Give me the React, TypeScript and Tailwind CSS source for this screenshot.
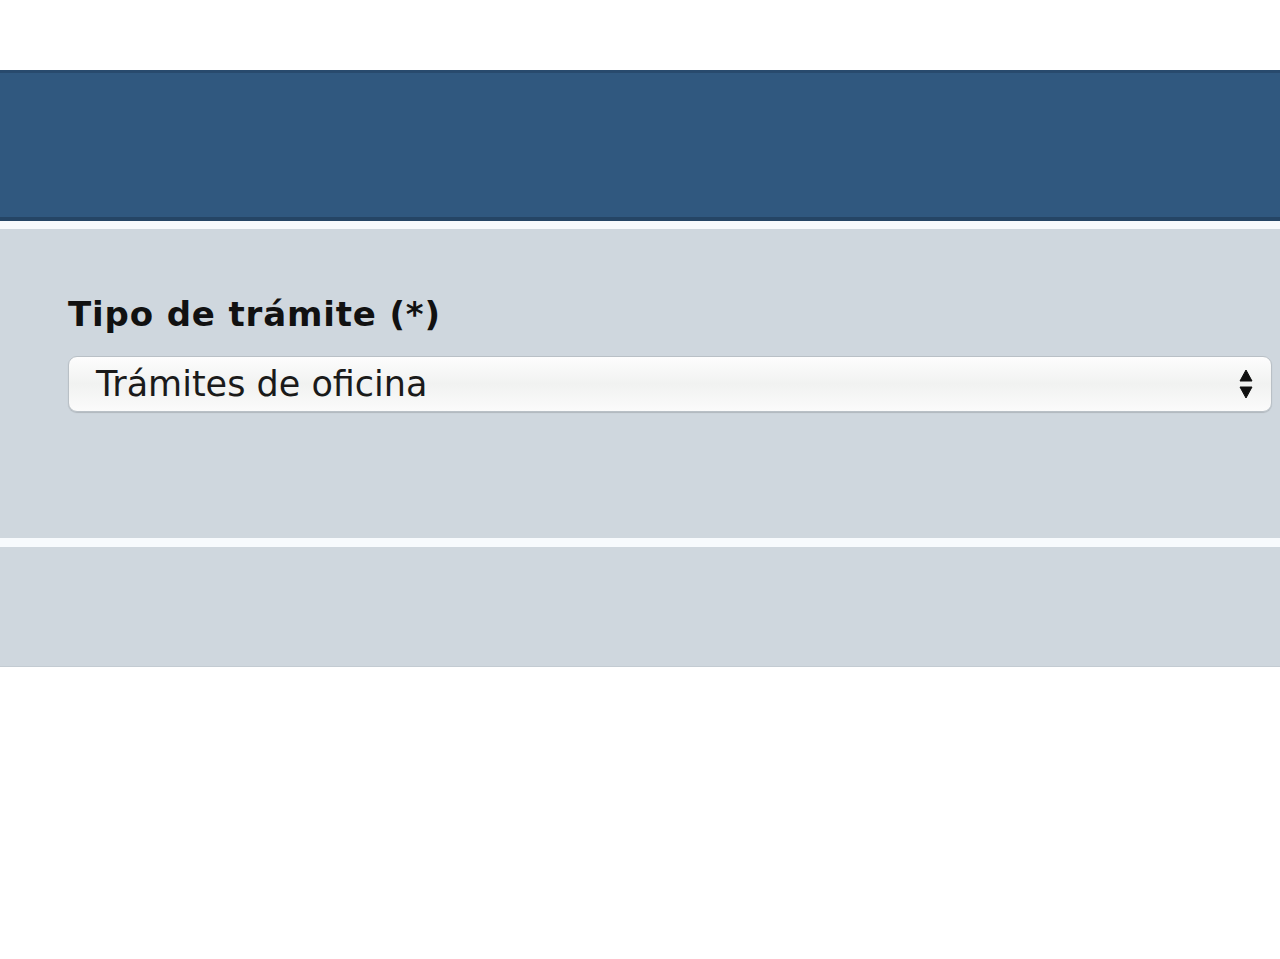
export default function App() {
  return (
    <div className="min-h-[959px] bg-white" style={{ fontFamily: '"DejaVu Sans", Verdana, sans-serif' }}>
      {/* Top spacer */}
      <div className="h-[70px]" />

      {/* Header band */}
      <div className="h-[151px] bg-[#30587f] border-t-[3px] border-t-[#284a6d] border-b-[4px] border-b-[#254565]" />

      <div className="h-[8px] bg-[#f7fafd]" />

      {/* Form panel */}
      <div className="h-[309px] bg-[#cfd7de] pl-[68px] pr-[8px] pt-[65px]">
        <label className="block text-[34px] leading-[40px] font-bold text-[#111] tracking-[0.85px]">
          Tipo de trámite (*)
        </label>
        <div className="mt-[22px] h-[56px] flex items-center justify-between rounded-[9px] border border-[#b9c0c6] bg-gradient-to-b from-[#fdfdfd] via-[#f1f2f1] to-[#fbfbfb] shadow-[0_1px_1px_rgba(0,0,0,0.15)] pl-[27px] pr-[18px]">
          <span className="text-[35px] leading-none text-[#1a1a1a]">Trámites de oficina</span>
          <svg width="14" height="34" viewBox="0 0 14 34" className="text-[#111]">
            <path d="M7 3 L13 14 L1 14 Z" fill="currentColor" stroke="currentColor" strokeWidth="1" strokeLinejoin="round" />
            <path d="M1 20 L13 20 L7 31 Z" fill="currentColor" stroke="currentColor" strokeWidth="1" strokeLinejoin="round" />
          </svg>
        </div>
      </div>

      <div className="h-[9px] bg-[#f7fafd]" />

      {/* Lower panel */}
      <div className="h-[120px] bg-[#cfd7de] border-b border-b-[#c3cbd2]" />
    </div>
  );
}
